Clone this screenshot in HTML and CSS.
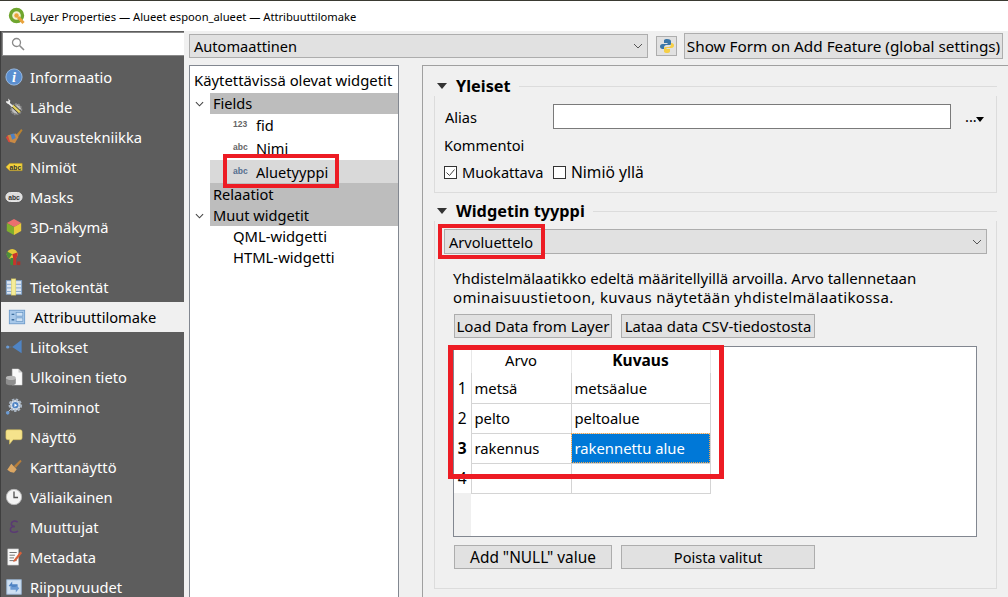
FILE: index.html
```html
<!DOCTYPE html>
<html lang="fi">
<head>
    <meta charset="UTF-8" />
    <title>Layer Properties</title>
    <link rel="stylesheet" href="styles.css">
</head>
<body>
    <div id="titlebar">
        <svg class="app-icon" viewBox="0 0 18 18">
            <circle cx="8.5" cy="8.5" r="6" fill="#f4f0d0" stroke="#6fa62f" stroke-width="3.4"/>
            <circle cx="8.5" cy="8.5" r="2.2" fill="#e9a23b"/>
            <path d="M10 10l5.5 6" stroke="#e9a23b" stroke-width="3"/>
        </svg>
        Layer Properties — Alueet espoon_alueet — Attribuuttilomake
    </div>
    <div id="main">
        <div id="sidebar">
            <div id="search">
                <svg viewBox="0 0 14 14" width="14" height="14"><circle cx="5.5" cy="5.5" r="4" fill="none" stroke="#8a8a8a" stroke-width="1.3"/><path d="M8.5 8.5l4.5 4.5" stroke="#8a8a8a" stroke-width="1.6"/></svg>
            </div>
            <div id="menu">
                <div class="menu-item">
                    <svg class="ico" viewBox="0 0 20 20"><circle cx="10" cy="10" r="9" fill="#5b8fd0" stroke="#9dbde4"/><text x="10" y="16" class="ico-i">i</text></svg>
                    Informaatio
                </div>
                <div class="menu-item">
                    <svg class="ico" viewBox="0 0 20 20"><circle cx="12.500" cy="12.500" r="5.500" fill="#c4c4c4" stroke="#8a8a8a" stroke-dasharray="2 1" stroke-width="2.400"/><path d="M8.500 8.500l8 7.500" stroke="#333" stroke-width="4.400"/><path d="M8.500 8.500l8 7.500" stroke="#e6d25e" stroke-width="2.600"/><path d="M3 4.500l5.500 5" stroke="#f0f0f0" stroke-width="2"/><path d="M1 3.500a3.200 3.200 0 0 0 4 3l1-3.500-2.500-2.500L4 3.500z" fill="#f0f0f0"/></svg>
                    Lähde
                </div>
                <div class="menu-item">
                    <svg class="ico" viewBox="0 0 20 20"><path d="M12 8l6-7 1.500 1.500-5.500 8z" fill="#b9822f"/><path d="M3 8l9-2 3 4-4 7-7-2z" fill="#c98a45"/><path d="M3 8l3 8-2-.5-3-5z" fill="#d8483c"/><path d="M6 7l4-1 2 5-4 2z" fill="#4f80c0"/></svg>
                    Kuvaustekniikka
                </div>
                <div class="menu-item">
                    <svg class="ico" viewBox="0 0 20 20"><path d="M1 10l4-4h14v8H5z" fill="#f2d13c" stroke="#c9a526" stroke-width=".6"/><text x="11.500" y="12.800" class="ico-abc">abc</text></svg>
                    Nimiöt
                </div>
                <div class="menu-item">
                    <svg class="ico" viewBox="0 0 20 20"><rect x="1" y="5" width="18" height="10" rx="5" fill="#ddd" stroke="#eee"/><text x="10" y="13.300" class="ico-abc">abc</text></svg>
                    Masks
                </div>
                <div class="menu-item">
                    <svg class="ico" viewBox="0 0 20 20"><path d="M10 1l8 4.500-8 4.500-8-4.500z" fill="#ea6f6f"/><path d="M2 5.500l8 4.500v9l-8-4.500z" fill="#7fae2e"/><path d="M18 5.500l-8 4.500v9l8-4.500z" fill="#e8c93a"/></svg>
                    3D-näkymä
                </div>
                <div class="menu-item">
                    <svg class="ico" viewBox="0 0 20 20"><circle cx="8" cy="7" r="6" fill="#e8c93a"/><path d="M8 7L2.500 4a6 6 0 0 0 2 8z" fill="#4e8f3a"/><path d="M8 7l5.500-2a6 6 0 0 1-3.500 8z" fill="#c9342c"/><rect x="9" y="8" width="3.500" height="11" fill="#c9342c"/><rect x="13.500" y="15" width="3.500" height="4" fill="#a8332b"/><rect x="6" y="11" width="3" height="8" fill="#3f8a3a"/></svg>
                    Kaaviot
                </div>
                <div class="menu-item">
                    <svg class="ico" viewBox="0 0 20 20"><rect x="1.500" y="3" width="17" height="15" fill="#dce6f2" stroke="#7fa3cc"/><path d="M2 7h16M2 11h16M2 15h16" stroke="#7fa3cc"/><rect x="7" y="1" width="5" height="18" fill="#f5ec9a" stroke="#d8c95a" stroke-width=".6"/></svg>
                    Tietokentät
                </div>
                <div class="menu-item selected">
                    <svg class="ico" viewBox="0 0 20 20"><rect x="1.500" y="2.500" width="17" height="15" fill="#a9c9ea" stroke="#6d9bcb"/><rect x="9" y="5" width="7.500" height="4" fill="#cfe2f5" stroke="#5f8fc0" stroke-width=".7"/><rect x="9" y="11" width="7.500" height="4" fill="#cfe2f5" stroke="#5f8fc0" stroke-width=".7"/><path d="M4 7h3M4 13h3" stroke="#3f6f9f" stroke-width="1.500"/></svg>
                    Attribuuttilomake
                </div>
                <div class="menu-item">
                    <svg class="ico" viewBox="0 0 20 20"><path d="M18.500 2v15L8 10z" fill="#4f84c4"/><path d="M2 10h6" stroke="#4f84c4" stroke-dasharray="1 1"/><circle cx="3" cy="10" r="1.800" fill="#6b9bd4"/></svg>
                    Liitokset
                </div>
                <div class="menu-item">
                    <svg class="ico" viewBox="0 0 20 20"><path d="M8 1h7l4 4v14H8z" fill="#fafafa" stroke="#ccc" stroke-width=".5"/><path d="M15 1v4h4" fill="#ccc"/><ellipse cx="6.500" cy="11" rx="5.500" ry="2.500" fill="#b8b8b8"/><path d="M1 11v6c0 3 11 3 11 0v-6c0 3-11 3-11 0z" fill="#8d8d8d"/></svg>
                    Ulkoinen tieto
                </div>
                <div class="menu-item">
                    <svg class="ico" viewBox="0 0 20 20"><circle cx="11.500" cy="8" r="6" fill="#d9e2ee" stroke="#aab6c4" stroke-dasharray="2.500 1.500" stroke-width="3"/><circle cx="11.500" cy="8" r="3.500" fill="#4f84c4"/><path d="M10.500 6l3 2-3 2z" fill="#fff"/><circle cx="3" cy="16.500" r="2" fill="#6b9bd4"/><path d="M4 15l3-3" stroke="#c9d6e5"/></svg>
                    Toiminnot
                </div>
                <div class="menu-item">
                    <svg class="ico" viewBox="0 0 20 20"><path d="M3 2h14q2 0 2 2v7q0 2-2 2H9l-4 5v-5H3q-2 0-2-2V4q0-2 2-2z" fill="#f5e38c" stroke="#d6bf5a" stroke-width=".6"/></svg>
                    Näyttö
                </div>
                <div class="menu-item">
                    <svg class="ico" viewBox="0 0 20 20"><path d="M10 9l7-7 1.500 1.500-6.500 7.500z" fill="#b97f3a"/><path d="M7 6.500l6 6-3 4q-4 0-7.500-3.500z" fill="#dca763"/></svg>
                    Karttanäyttö
                </div>
                <div class="menu-item">
                    <svg class="ico" viewBox="0 0 20 20"><circle cx="10" cy="10" r="8.500" fill="#f4f4f4" stroke="#b8b8b8"/><path d="M10 4v6.500h4.500" fill="none" stroke="#555" stroke-width="1.500"/></svg>
                    Väliaikainen
                </div>
                <div class="menu-item">
                    <svg class="ico" viewBox="0 0 20 20"><path d="M14 4.500C11 2.500 7 3.500 7 6.500c0 2 2 3 4 3-3 0-5 1.500-5 3.500 0 3 5 4 8.500 1.500" fill="none" stroke="#5a3a73" stroke-width="1.700"/></svg>
                    Muuttujat
                </div>
                <div class="menu-item">
                    <svg class="ico" viewBox="0 0 20 20"><path d="M3 1h12v18H3z" fill="#fafafa" stroke="#bbb" stroke-width=".6"/><path d="M5 5h8M5 8h6M5 11h5M5 14h8" stroke="#666"/><path d="M10 13l7-9 2 1.500-7 9-3 1z" fill="#d9603a"/></svg>
                    Metadata
                </div>
                <div class="menu-item">
                    <svg class="ico" viewBox="0 0 20 20"><rect x="2" y="2" width="16" height="16" fill="#cfe0f2" stroke="#9dbbdb"/><path d="M4 9l4-5v3h6v4H8v-1z" fill="#4f84c4"/><path d="M16 11l-4 5v-3H6v-3h6v-1z" fill="#6b9bd4"/></svg>
                    Riippuvuudet
                </div>
            </div>
        </div>
        <div id="content">
            <div id="toolbar">
                <div class="combo form-combo">
                    Automaattinen
                    <svg class="chevron" viewBox="0 0 10 6"><path d="M1 1l4 4 4-4" fill="none" stroke="#555"/></svg>
                </div>
                <div id="python-btn">
                    <svg viewBox="0 0 16 16" width="16" height="16"><path d="M8 1C5 1 5 2 5 3.500V5h3.500v1H3.500C2 6 1 7 1 8.500S2 11 3.500 11H5V9.500C5 8 6 7 7.500 7h3C11.500 7 12 6.500 12 5.500v-2C12 2 11 1 8 1z" fill="#3b77a8"/><path d="M8 15c3 0 3-1 3-2.500V11H7.500v-1h5c1.500 0 2.500-1 2.500-2.500S14 5 12.500 5H12v1.500C12 8 11 9 9.500 9h-3C5.500 9 5 9.500 5 10.500v2C5 14 5 15 8 15z" fill="#f5cf47"/></svg>
                </div>
                <div class="btn show-form">Show Form on Add Feature (global settings)</div>
            </div>
            <div id="panels">
                <div id="tree">
                    <div class="tree-title">Käytettävissä olevat widgetit</div>
                    <div class="tree-row group-row">
                        <svg class="caret" viewBox="0 0 10 6"><path d="M1 1l4 4 4-4" fill="none" stroke="#444" stroke-width="1.200"/></svg>
                        <span class="tree-label">Fields</span>
                    </div>
                    <div class="tree-row field-row"><span class="type-tag">123</span>fid</div>
                    <div class="tree-row field-row"><span class="type-tag">abc</span>Nimi</div>
                    <div class="tree-row field-row current"><span class="type-tag">abc</span>Aluetyyppi</div>
                    <div class="tree-row group-row tall"><span class="tree-label">Relaatiot</span></div>
                    <div class="tree-row group-row">
                        <svg class="caret" viewBox="0 0 10 6"><path d="M1 1l4 4 4-4" fill="none" stroke="#444" stroke-width="1.200"/></svg>
                        <span class="tree-label">Muut widgetit</span>
                    </div>
                    <div class="tree-row field-row plain">QML-widgetti</div>
                    <div class="tree-row field-row plain">HTML-widgetti</div>
                    <div class="mark mark-field"></div>
                </div>
                <div id="form">
                    <div class="group-head">
                        <span class="triangle"></span>
                        <span class="group-title">Yleiset</span>
                        <span class="group-line"></span>
                    </div>
                    <div class="group-box general">
                        <div class="alias-row">
                            <span class="alias-label">Alias</span>
                            <div class="text-input"></div>
                            <span class="dots">...<i class="dots-arrow"></i></span>
                        </div>
                        <div class="comment-row">Kommentoi</div>
                        <div class="check-row">
                            <span class="check checked">
                                <svg viewBox="0 0 11 11" width="11" height="11"><path d="M1.500 5.500l3 3 5-6" fill="none" stroke="#444"/></svg>
                            </span>
                            <span class="check-label">Muokattava</span>
                            <span class="check"></span>
                            <span class="check-label wide">Nimiö yllä</span>
                        </div>
                    </div>
                    <div class="group-head second">
                        <span class="triangle"></span>
                        <span class="group-title">Widgetin tyyppi</span>
                        <span class="group-line"></span>
                    </div>
                    <div class="group-box widget">
                        <div class="combo type-combo">
                            Arvoluettelo
                            <svg class="chevron" viewBox="0 0 10 6"><path d="M1 1l4 4 4-4" fill="none" stroke="#555"/></svg>
                        </div>
                        <p class="help">Yhdistelmälaatikko edeltä määritellyillä arvoilla. Arvo tallennetaan<br><span class="help-second">ominaisuustietoon, kuvaus näytetään yhdistelmälaatikossa.</span></p>
                        <div class="btn-row">
                            <div class="btn load-btn">Load Data from Layer</div>
                            <div class="btn csv-btn">Lataa data CSV-tiedostosta</div>
                        </div>
                        <div class="table-frame">
                            <table class="values">
                                <tr class="head-row"><th class="num"></th><th class="col-a">Arvo</th><th class="col-b">Kuvaus</th></tr>
                                <tr class="first-row"><th class="num">1</th><td>metsä</td><td>metsäalue</td></tr>
                                <tr><th class="num">2</th><td>pelto</td><td>peltoalue</td></tr>
                                <tr><th class="num cur">3</th><td>rakennus</td><td class="sel">rakennettu alue</td></tr>
                                <tr><th class="num">4</th><td></td><td></td></tr>
                            </table>
                        </div>
                        <div class="btn-row bottom">
                            <div class="btn load-btn null-btn">Add "NULL" value</div>
                            <div class="btn csv-btn remove-btn">Poista valitut</div>
                        </div>
                        <div class="mark mark-combo"></div>
                        <div class="mark mark-table"></div>
                    </div>
                </div>
            </div>
        </div>
    </div>
</body>
</html>
```
FILE: styles.css
```css
body {
    margin: 0;
    width: 1008px;
    height: 597px;
    overflow: hidden;
    background: #f0f0f0;
    font-family: "Noto Sans", sans-serif;
    font-size: 14.6px;
    color: #000;
}
#titlebar {
    height: 30px;
    border-top: 1px solid #3a3a32;
    background: #fff;
    display: flex;
    align-items: center;
    font-size: 11.2px;
    padding-left: 8px;
    gap: 4px;
}
.app-icon {
    width: 18px;
    height: 18px;
}
#main {
    display: flex;
    height: 566px;
}
#sidebar {
    width: 184px;
    flex-shrink: 0;
    background: #5d5d5d;
    border-left: 1px solid #3f3f3f;
    box-sizing: border-box;
    overflow: hidden;
}
#search {
    height: 24px;
    margin: 1px 0 0 1px;
    background: #fff;
    border: 1px solid #8a8a8a;
    border-right: none;
    box-sizing: border-box;
    display: flex;
    align-items: center;
    padding-left: 8px;
}
#menu {
    padding-top: 6px;
}
.menu-item {
    height: 30px;
    display: flex;
    align-items: center;
    gap: 7px;
    padding-left: 4px;
    color: #fff;
    font-size: 14.7px;
    white-space: nowrap;
}
.menu-item.selected {
    background: #f0f0f0;
    color: #000;
    padding-left: 7px;
    gap: 8px;
}
.ico {
    width: 18px;
    height: 18px;
    flex-shrink: 0;
}
.ico-i {
    font-family: "Liberation Serif", serif;
    font-style: italic;
    font-weight: bold;
    font-size: 16px;
    fill: #fff;
    text-anchor: middle;
}
.ico-abc {
    font-family: "Liberation Sans", sans-serif;
    font-weight: bold;
    font-size: 7.5px;
    fill: #333;
    text-anchor: middle;
}
#content {
    flex: 1;
    padding-left: 5px;
    min-width: 0;
}
#toolbar {
    height: 34px;
    display: flex;
    align-items: flex-start;
    padding-top: 3px;
    box-sizing: border-box;
}
.combo {
    background: #e1e1e1;
    border: 1px solid #adadad;
    box-sizing: border-box;
    display: flex;
    align-items: center;
    justify-content: space-between;
    padding: 0 4px;
}
.chevron {
    width: 10px;
    height: 6px;
}
.form-combo {
    width: 459px;
    height: 24px;
}
#python-btn {
    width: 21px;
    height: 20px;
    margin: 2px 7px 0 8px;
    background: #e1e1e1;
    border: 1px solid #adadad;
    box-sizing: border-box;
    display: flex;
    align-items: center;
    justify-content: center;
}
.btn {
    background: #e1e1e1;
    border: 1px solid #adadad;
    box-sizing: border-box;
    display: flex;
    align-items: center;
    justify-content: center;
    white-space: nowrap;
}
.show-form {
    width: 319px;
    height: 26px;
    margin-top: -1px;
    font-size: 15.3px;
}
#panels {
    display: flex;
    height: 532px;
    gap: 23px;
}
#tree {
    position: relative;
    width: 210px;
    border: 1px solid #828790;
    border-bottom: none;
    background: #fff;
    box-sizing: border-box;
    padding-top: 3px;
}
.tree-title {
    height: 24px;
    line-height: 22px;
    padding-left: 4px;
    font-size: 14.85px;
    white-space: nowrap;
}
.tree-row {
    display: flex;
    align-items: center;
    height: 23px;
    box-sizing: border-box;
    position: relative;
}
.group-row {
    padding-left: 20px;
    height: 21px;
}
.group-row.tall {
    height: 22px;
}
.tree-label {
    background: #bdbdbd;
    flex: 1;
    padding: 0 0 1px 3px;
    box-sizing: border-box;
    height: 100%;
    display: flex;
    align-items: center;
}
.caret {
    position: absolute;
    left: 5px;
    top: 8px;
    width: 9px;
    height: 6px;
}
.field-row {
    padding-left: 43px;
    padding-bottom: 2px;
}
.field-row.plain {
    height: 21px;
    padding-bottom: 1px;
    font-size: 14.8px;
}
.current {
    background: #d9d9d9;
    margin-left: 20px;
    padding-left: 23px;
    padding-bottom: 0;
}
.type-tag {
    font-family: "Liberation Sans", sans-serif;
    font-size: 8.500px;
    font-weight: bold;
    color: #666;
    width: 23px;
    flex-shrink: 0;
    position: relative;
    top: -1px;
}
.current .type-tag {
    color: #566f8f;
}
.mark {
    position: absolute;
    border: 4px solid #ed1c24;
    box-sizing: border-box;
}
.mark-field {
    left: 33px;
    top: 88px;
    width: 116px;
    height: 34px;
}
#form {
    flex: 1;
    border-left: 1px solid #a0a0a0;
    border-top: 1px solid #a0a0a0;
    padding: 10px 11px 0 11px;
    min-width: 0;
}
.group-head {
    display: flex;
    align-items: center;
    height: 20px;
}
.group-head.second {
    margin-top: 8px;
}
.triangle {
    width: 0;
    height: 0;
    margin-left: 3px;
    border-left: 5.500px solid transparent;
    border-right: 5.500px solid transparent;
    border-top: 6px solid #333;
}
.group-title {
    font-weight: bold;
    font-size: 16.3px;
    margin: 0 8px 0 9px;
}
.group-line {
    flex: 1;
    height: 1px;
    background: #dcdcdc;
}
.group-box {
    border: 1px solid #dcdcdc;
    border-top: none;
    box-sizing: border-box;
    padding: 0 9px;
}
.general {
    height: 97px;
    padding-top: 8px;
}
.alias-row {
    display: flex;
    align-items: center;
    height: 25px;
}
.alias-label {
    width: 108px;
    margin-left: 1px;
}
.text-input {
    width: 398px;
    height: 25px;
    background: #fff;
    border: 1px solid #7a7a7a;
    box-sizing: border-box;
}
.dots {
    margin-left: 14px;
    position: relative;
    line-height: 1;
}
.dots-arrow {
    position: absolute;
    left: 11px;
    top: 8px;
    border-left: 4px solid transparent;
    border-right: 4px solid transparent;
    border-top: 5px solid #000;
}
.comment-row {
    height: 22px;
    margin-top: 5px;
    display: flex;
    align-items: center;
}
.check-row {
    display: flex;
    align-items: center;
    height: 24px;
    margin-top: 4px;
}
.check {
    width: 13px;
    height: 13px;
    border: 1px solid #333;
    box-sizing: border-box;
    background: #fff;
    display: flex;
    align-items: center;
    justify-content: center;
}
.check svg {
    flex-shrink: 0;
}
.check-label {
    width: 80px;
    margin: 0 11px 0 5px;
    white-space: nowrap;
}
.check-label.wide {
    font-size: 15.600px;
}
.widget {
    position: relative;
    height: 368px;
    padding-top: 8px;
}
.type-combo {
    width: 543px;
    height: 25px;
}
.help {
    margin: 15px 0 0 9px;
    line-height: 19px;
    font-size: 15px;
    white-space: nowrap;
}
.help-second {
    letter-spacing: .37px;
}
.btn-row {
    display: flex;
    gap: 9px;
    margin: 7px 0 0 10px;
}
.btn-row.bottom {
    margin-top: 8px;
}
.load-btn {
    width: 158px;
    height: 24px;
    font-size: 15.100px;
}
.csv-btn {
    width: 194px;
    height: 24px;
    font-size: 14.900px;
}
.null-btn {
    font-size: 15.400px;
}
.remove-btn {
    font-size: 14.600px;
}
.table-frame {
    height: 191px;
    width: 524px;
    margin: 8px 0 0 9px;
    border: 1px solid #828790;
    box-sizing: border-box;
    background: linear-gradient(to right, #f0f0f0 17px, #fff 17px);
}
.values {
    border-collapse: collapse;
    table-layout: fixed;
    width: 256px;
    font-size: 14.800px;
}
.values th, .values td {
    padding: 0;
    box-sizing: border-box;
    font-weight: normal;
    background: #fff;
}
.values td {
    border: 1px solid #d4d4d4;
    padding-left: 3px;
    height: 30px;
}
.values .first-row td {
    border-top: none;
}
.values .head-row th {
    height: 26px;
}
.values .head-row .col-a, .values .head-row .col-b {
    border-left: 1px solid #e8e8e8;
    border-right: 1px solid #e8e8e8;
}
.num {
    width: 17px;
}
.values th.num {
    font-size: 15.500px;
}
.values .cur, .values .col-b {
    font-weight: bold;
}
.values .col-b {
    font-size: 15.500px;
}
.col-a {
    width: 100px;
}
.col-b {
    width: 139px;
}
.values td.sel {
    background: #0078d7;
    color: #fff;
    outline: 1px dotted #f2a64a;
    outline-offset: -1px;
}
.mark-combo {
    left: 3px;
    top: 3px;
    width: 107px;
    height: 35px;
}
.mark-table {
    left: 13px;
    top: 124px;
    width: 276px;
    height: 134px;
    border-width: 5px;
}
```
